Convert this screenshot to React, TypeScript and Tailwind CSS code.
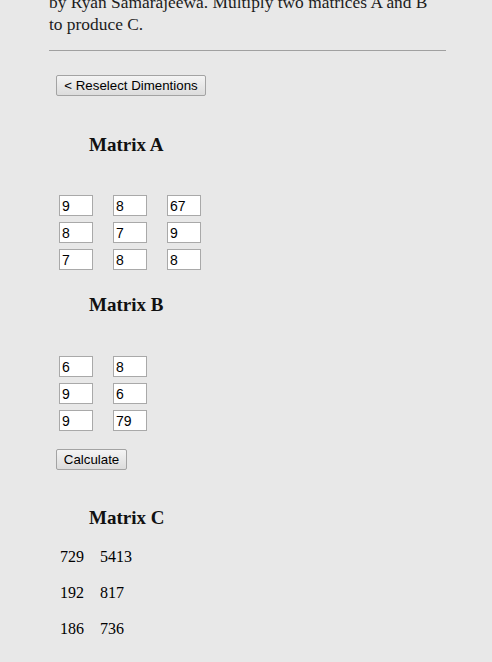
import React from "react";

const serif = { fontFamily: '"Liberation Serif", "Times New Roman", serif' };

function Cell({ v }: { v: string }) {
  return (
    <input
      defaultValue={v}
      className="box-border h-[21px] w-[34px] border border-[#a9a9a9] bg-white px-[2px] text-[14px] leading-[19px] text-black outline-none [font-family:'Liberation_Sans',Arial,sans-serif]"
    />
  );
}

function Btn({ children, w }: { children: React.ReactNode; w: string }) {
  return (
    <button
      className={`ml-[7px] box-border flex h-[21px] items-center justify-center rounded-[2px] border border-[#a3a3a3] bg-gradient-to-b from-[#f4f4f4] to-[#dcdcdc] text-[13.3px] leading-none text-black [font-family:'Liberation_Sans',Arial,sans-serif] ${w}`}
    >
      {children}
    </button>
  );
}

function Heading({ children, mt }: { children: React.ReactNode; mt: string }) {
  return (
    <h2 className={`ml-[40px] h-[24px] text-[19px] font-bold leading-[24px] text-[#111] ${mt}`} style={serif}>
      {children}
    </h2>
  );
}

function Grid({ rows, mt }: { rows: string[][]; mt: string }) {
  return (
    <div className={`ml-[10px] flex flex-col gap-[6px] ${mt}`}>
      {rows.map((r, i) => (
        <div key={i} className="flex gap-[20px]">
          {r.map((v, j) => (
            <Cell key={j} v={v} />
          ))}
        </div>
      ))}
    </div>
  );
}

export default function App() {
  const a = [
    ["9", "8", "67"],
    ["8", "7", "9"],
    ["7", "8", "8"],
  ];
  const b = [
    ["6", "8"],
    ["9", "6"],
    ["9", "79"],
  ];
  const c = [
    ["729", "5413"],
    ["192", "817"],
    ["186", "736"],
  ];
  return (
    <div className="h-[662px] w-full overflow-hidden bg-[#e8e8e8]">
      <div className="ml-[49px] flex w-[397px] flex-col items-start">
        <p className="-mt-[9px] text-[17.4px] leading-[22px] text-[#1c1c1c]" style={serif}>
          by Ryan Samarajeewa. Multiply two matrices A and B
          <br />
          to produce C.
        </p>
        <div className="mt-[15px] h-px w-full bg-[#a0a0a0]" />
        <div className="mt-[24px]">
          <Btn w="w-[150px]">&lt; Reselect Dimentions</Btn>
        </div>
        <Heading mt="mt-[37px]">Matrix A</Heading>
        <Grid rows={a} mt="mt-[38px]" />
        <Heading mt="mt-[23px]">Matrix B</Heading>
        <Grid rows={b} mt="mt-[39px]" />
        <div className="mt-[18px]">
          <Btn w="w-[71px]">Calculate</Btn>
        </div>
        <Heading mt="mt-[36px]">Matrix C</Heading>
        <div className="ml-[11px] mt-[9px] flex flex-col text-[16px] leading-[36px] text-black" style={serif}>
          {c.map((r, i) => (
            <div key={i} className="flex">
              <span className="w-[40px]">{r[0]}</span>
              <span>{r[1]}</span>
            </div>
          ))}
        </div>
      </div>
    </div>
  );
}
